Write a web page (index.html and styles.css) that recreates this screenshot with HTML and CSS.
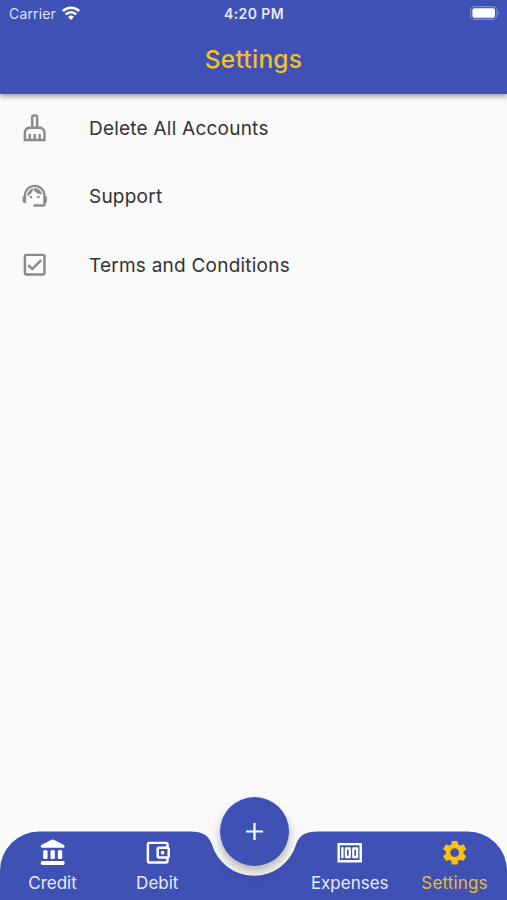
FILE: index.html
```html
<!DOCTYPE html>
<html lang="en">
<head>
<meta charset="utf-8">
<title>Settings</title>
<link rel="stylesheet" href="styles.css">
</head>
<body>
<div class="app">
  <header class="header">
    <div class="status">
      <div class="carrier"><span>Carrier</span>
        <svg width="18" height="14" viewBox="0 0 18 14" fill="none" stroke="#fff" stroke-width="2.6"><path d="M.9 5.200a11.400 11.400 0 0 1 16.200 0M3.800 8.500a7.300 7.300 0 0 1 10.400 0"/><path d="M9 13.900l-2.900-2.900a4.100 4.100 0 0 1 5.800 0z" fill="#fff" stroke="none"/></svg>
      </div>
      <time class="clock">4:20 PM</time>
      <svg class="battery" width="31" height="14" viewBox="0 0 31 14"><rect x=".6" y=".6" width="26.200" height="12.800" rx="4" fill="none" stroke="#7f8cd4" stroke-width="1.100"/><rect x="2.400" y="2.300" width="22.600" height="9.400" rx="2" fill="#fff"/><path d="M28.300 4.700q2.200 2.300 0 4.600z" fill="#8f9bdc"/></svg>
    </div>
    <h1 class="title">Settings</h1>
  </header>
  <main class="list">
    <div class="row">
      <svg class="icon" viewBox="0 0 24 24"><path d="M16 11h-1V3c0-1.100-.9-2-2-2h-2c-1.100 0-2 .9-2 2v8H8c-2.760 0-5 2.240-5 5v7h18v-7c0-2.760-2.240-5-5-5zm-5-8h2v8h-2V3zm8 18h-2v-3c0-.55-.45-1-1-1s-1 .45-1 1v3h-2v-3c0-.55-.45-1-1-1s-1 .45-1 1v3H9v-3c0-.55-.45-1-1-1s-1 .45-1 1v3H5v-5c0-1.650 1.350-3 3-3h8c1.650 0 3 1.350 3 3v5z"/></svg>
      <span>Delete All Accounts</span>
    </div>
    <div class="row">
      <svg class="icon" viewBox="0 0 24 24"><path d="M21 12.220C21 6.730 16.740 3 12 3c-4.690 0-9 3.650-9 9.280-.6.34-1 .98-1 1.720v2c0 1.100.9 2 2 2h1v-6.100c0-3.870 3.130-7 7-7s7 3.130 7 7V19h-8v2h8c1.100 0 2-.9 2-2v-1.220c.59-.31 1-.92 1-1.640v-2.300c0-.7-.41-1.310-1-1.620z"/><circle cx="9" cy="13" r="1"/><circle cx="15" cy="13" r="1"/><path d="M18 11.030C17.520 8.180 15.040 6 12.050 6c-3.030 0-6.290 2.510-6.030 6.450 2.470-1.010 4.330-3.210 4.860-5.890 1.310 2.630 4 4.440 7.120 4.470z"/></svg>
      <span>Support</span>
    </div>
    <div class="row">
      <svg class="icon" viewBox="0 0 24 24"><path d="M19 3H5c-1.100 0-2 .9-2 2v14c0 1.100.9 2 2 2h14c1.100 0 2-.9 2-2V5c0-1.100-.9-2-2-2zm0 16H5V5h14v14zM17.990 9l-1.410-1.420-6.590 6.590-2.580-2.570-1.420 1.410 4 3.990z"/></svg>
      <span>Terms and Conditions</span>
    </div>
  </main>
  <nav class="nav">
    <svg class="nav-shape" width="507" height="69" viewBox="0 0 507 69"><path d="M0 69V39.500A39.200 39.200 0 0 1 39.200.5H190C203 .5 208.500 4.500 211.750 13A44 44 0 0 0 296.250 13C299.500 4.500 305 .5 318 .5H467.800A39.200 39.200 0 0 1 507 39.500V69z"/></svg>
    <a class="tab">
      <svg class="icon" viewBox="0 0 24 24"><path d="M11.100 1.400q.9-.5 1.800 0l8.300 4.300c1 .6.6 2.300-.6 2.300H3.400c-1.200 0-1.600-1.700-.6-2.300z"/><rect x="4.200" y="9.800" width="3.600" height="7.400" rx="1.300"/><rect x="10.200" y="9.800" width="3.600" height="7.400" rx="1.300"/><rect x="16.200" y="9.800" width="3.600" height="7.400" rx="1.300"/><rect x="2.300" y="18.700" width="19.400" height="3.300" rx="1.300"/></svg>
      <span>Credit</span>
    </a>
    <a class="tab">
      <svg class="icon" viewBox="0 0 24 24"><path d="M21 7.280V5c0-1.100-.9-2-2-2H5c-1.110 0-2 .9-2 2v14c0 1.100.89 2 2 2h14c1.100 0 2-.9 2-2v-2.280c.59-.35 1-.98 1-1.720V9c0-.74-.41-1.370-1-1.720zM20 9v6h-7V9h7zM5 19V5h14v2h-6c-1.100 0-2 .9-2 2v6c0 1.100.9 2 2 2h6v2H5z"/><circle cx="16" cy="12" r="1.500"/></svg>
      <span>Debit</span>
    </a>
    <a class="tab expenses">
      <svg class="icon" viewBox="0 0 24 24"><path d="M2 4v16h20V4H2zm2 14V6h16v12H4zM5 7.500h2v9H5zM12 7.500H9c-.55 0-1 .45-1 1v7c0 .55.45 1 1 1h3c.55 0 1-.45 1-1v-7c0-.55-.45-1-1-1zm-.8 7H9.800v-5h1.400v5zM18 7.500h-3c-.55 0-1 .45-1 1v7c0 .55.45 1 1 1h3c.55 0 1-.45 1-1v-7c0-.55-.45-1-1-1zm-.8 7h-1.400v-5h1.400v5z"/></svg>
      <span>Expenses</span>
    </a>
    <a class="tab settings">
      <svg class="icon" viewBox="0 0 24 24"><path d="M19.140 12.940c.04-.3.060-.61.060-.94 0-.32-.02-.64-.07-.94l2.030-1.580c.18-.14.23-.41.12-.61l-1.920-3.320c-.12-.22-.37-.29-.59-.22l-2.390.96c-.5-.38-1.030-.7-1.620-.94l-.36-2.540c-.04-.24-.24-.41-.48-.41h-3.840c-.24 0-.43.17-.47.41l-.36 2.540c-.59.24-1.130.57-1.620.94l-2.390-.96c-.22-.08-.47 0-.59.22L2.740 8.870c-.12.21-.08.47.12.61l2.030 1.580c-.05.3-.09.63-.09.94s.02.64.07.94l-2.030 1.580c-.18.14-.23.41-.12.61l1.920 3.320c.12.22.37.29.59.22l2.390-.96c.5.38 1.030.7 1.620.94l.36 2.540c.05.24.24.41.48.41h3.840c.24 0 .44-.17.47-.41l.36-2.540c.59-.24 1.130-.56 1.620-.94l2.390.96c.22.08.47 0 .59-.22l1.920-3.320c.12-.22.07-.47-.12-.61l-2.010-1.580zM12 15.600c-1.980 0-3.600-1.620-3.600-3.600s1.620-3.600 3.600-3.600 3.600 1.620 3.600 3.600-1.620 3.600-3.600 3.600z"/></svg>
      <span>Settings</span>
    </a>
    <button class="fab" aria-label="Add"><svg width="17" height="17" viewBox="0 0 17 17"><path d="M8.500 0v17M0 8.500h17" stroke="#fff" stroke-width="2.200"/></svg></button>
  </nav>
</div>
</body>
</html>
```
FILE: styles.css
```css
* { box-sizing: border-box; }
body { margin: 0; font-family: Inter, "Liberation Sans", sans-serif; background: #fafafa; }
.app { width: 507px; height: 900px; display: flex; flex-direction: column; overflow: hidden; }
.header { height: 93.5px; background: #3f51b5; box-shadow: 0 2px 5px rgba(0,0,0,.3), 0 4px 5px rgba(0,0,0,.1); }
.status { height: 26px; padding: 0 6px 0 9px; display: grid; grid-template-columns: 1fr auto 1fr; align-items: center; color: #fff; }
.carrier { display: flex; align-items: center; gap: 6px; font-size: 14px; color: #dfe4fc; letter-spacing: .15px; }
.clock { padding-right: 2px; font-size: 14px; font-weight: 600; letter-spacing: .4px; color: #e6eaff; }
.battery { justify-self: end; }
.title { margin: 0; height: 67px; line-height: 67px; text-align: center; font-size: 24.5px; font-weight: 500; color: #f4c025; letter-spacing: .25px; }
.list { flex: 1; }
.row { height: 68.4px; display: flex; align-items: center; padding-left: 20.4px; gap: 39.2px; font-size: 19px; letter-spacing: .23px; color: #333; }
.row span { padding-top: 1.8px; }
.row .icon { fill: #8b8b8b; }
.icon { width: 29.4px; height: 29.4px; display: block; flex: none; }
.nav { position: relative; height: 69px; display: grid; grid-template-columns: 105px 104.5px 88px 104.5px 105px; }
.nav-shape { position: absolute; inset: 0; fill: #3f51b5; }
.tab { position: relative; display: flex; flex-direction: column; align-items: center; padding-top: 7px; color: #e6eaff; font-size: 17px; line-height: 20px; gap: 6px; }
.tab .icon { fill: #fff; }
.expenses { grid-column: 4; }
.settings { color: #e8ba3b; letter-spacing: .15px; }
.settings .icon { fill: #ffc107; }
.fab { position: absolute; left: 219.5px; top: -34px; width: 69px; height: 69px; padding: 0; border: 0; border-radius: 50%; background: #3f51b5; display: grid; place-items: center; box-shadow: 0 4px 6px rgba(0,0,0,.12), 0 7px 12px 1px rgba(0,0,0,.16); }
```
